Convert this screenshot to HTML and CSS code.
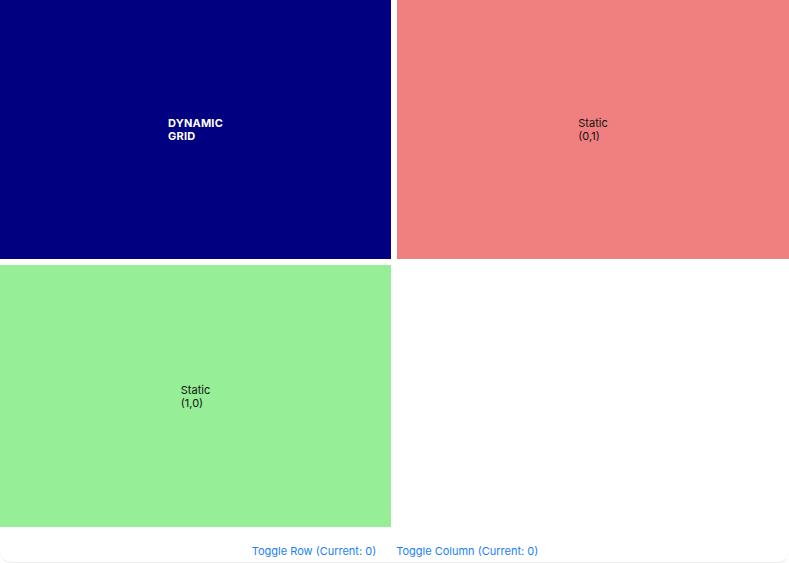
FILE: index.html
```html
<!DOCTYPE html>
<html>
<head>
<meta charset="utf-8">
<link rel="stylesheet" href="styles.css">
</head>
<body>
<div class="app">
  <div class="grid">
    <div class="cell navy"><div class="label bold">DYNAMIC<br>GRID</div></div>
    <div class="cell coral"><div class="label">Static<br>(0,1)</div></div>
    <div class="cell green"><div class="label">Static<br>(1,0)</div></div>
    <div class="cell empty"></div>
  </div>
  <div class="footer">
    <button class="link">Toggle Row (Current: 0)</button>
    <button class="link">Toggle Column (Current: 0)</button>
  </div>
</div>
</body>
</html>
```
FILE: styles.css
```css
html, body {
  margin: 0;
  padding: 0;
  background: #ffffff;
}
body {
  font-family: Inter, "Liberation Sans", sans-serif;
  font-size: 11px;
}
.app {
  width: 789px;
  height: 563px;
  display: flex;
  flex-direction: column;
  box-sizing: border-box;
  border-bottom: 1px solid #ececec;
  border-radius: 0 0 11px 11px;
  overflow: hidden;
}
.grid {
  display: grid;
  grid-template-columns: 391px 392px;
  grid-template-rows: 259px 262px;
  gap: 6px;
  height: 527px;
}
.cell {
  display: flex;
  align-items: center;
  justify-content: center;
}
.navy { background: #000080; color: #ffffff; }
.coral { background: #f08080; color: #111111; }
.green { background: #96ee96; color: #111111; }
.empty { background: #ffffff; }
.label {
  line-height: 13px;
  text-align: left;
  padding-top: 1px;
}
.bold {
  font-weight: 700;
  letter-spacing: 0.2px;
}
.footer {
  flex: 1;
  display: flex;
  align-items: center;
  justify-content: center;
  gap: 20px;
  padding-top: 13px;
  padding-left: 1px;
}
.link {
  border: none;
  background: none;
  padding: 0;
  font: inherit;
  font-size: 11px;
  font-weight: 400;
  color: #1a7ff5;
  cursor: pointer;
}
```
